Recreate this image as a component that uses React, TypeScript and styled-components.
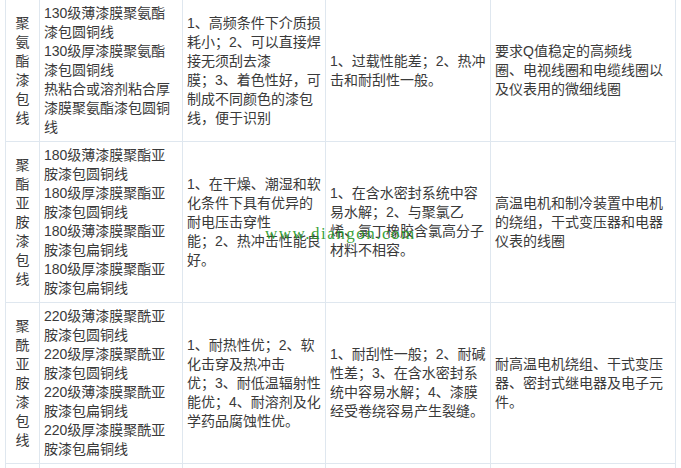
import styled, { createGlobalStyle } from "styled-components";

const GlobalStyle = createGlobalStyle`
  body {
    margin: 0;
    background: #fff;
    font-family: "Liberation Sans", "Noto Sans CJK SC", sans-serif;
  }
`;

const Page = styled.div`
  position: relative;
  padding: 0 5px;
`;

const Table = styled.table`
  margin-top: -1px;
  width: 670px;
  table-layout: fixed;
  border-collapse: collapse;
  color: #3a3a3a;
  font-size: 14px;
  line-height: 19px;
`;

const Cell = styled.td<{ $center?: boolean }>`
  border: 1px solid #dfe7ef;
  padding: 4px;
  vertical-align: middle;
  text-align: ${(p) => (p.$center ? "center" : "left")};
`;

const Line = styled.div`
  white-space: nowrap;
`;

const Watermark = styled.div`
  position: absolute;
  left: 265px;
  top: 225px;
  font-family: "Liberation Serif", serif;
  font-size: 17px;
  letter-spacing: 1.5px;
  line-height: 20px;
  color: rgba(34, 150, 34, 0.9);
  pointer-events: none;
`;

interface IRow {
  name: string;
  types: string[];
  pros: string[];
  cons: string[];
  uses: string[];
}

const rows: IRow[] = [
  {
    name: "聚氨酯漆包线",
    types: [
      "130级薄漆膜聚氨酯",
      "漆包圆铜线",
      "130级厚漆膜聚氨酯",
      "漆包圆铜线",
      "热粘合或溶剂粘合厚",
      "漆膜聚氨酯漆包圆铜",
      "线",
    ],
    pros: [
      "1、高频条件下介质损",
      "耗小；2、可以直接焊",
      "接无须刮去漆",
      "膜；3、着色性好，可",
      "制成不同颜色的漆包",
      "线，便于识别",
    ],
    cons: ["1、过载性能差；2、热冲", "击和耐刮性一般。"],
    uses: ["要求Q值稳定的高频线", "圈、电视线圈和电缆线圈以", "及仪表用的微细线圈"],
  },
  {
    name: "聚酯亚胺漆包线",
    types: [
      "180级薄漆膜聚酯亚",
      "胺漆包圆铜线",
      "180级厚漆膜聚酯亚",
      "胺漆包圆铜线",
      "180级薄漆膜聚酯亚",
      "胺漆包扁铜线",
      "180级厚漆膜聚酯亚",
      "胺漆包扁铜线",
    ],
    pros: [
      "1、在干燥、潮湿和软",
      "化条件下具有优异的",
      "耐电压击穿性",
      "能；2、热冲击性能良",
      "好。",
    ],
    cons: [
      "1、在含水密封系统中容",
      "易水解；2、与聚氯乙",
      "烯、氯丁橡胶含氯高分子",
      "材料不相容。",
    ],
    uses: ["高温电机和制冷装置中电机", "的绕组，干式变压器和电器", "仪表的线圈"],
  },
  {
    name: "聚酰亚胺漆包线",
    types: [
      "220级薄漆膜聚酰亚",
      "胺漆包圆铜线",
      "220级厚漆膜聚酰亚",
      "胺漆包圆铜线",
      "220级薄漆膜聚酰亚",
      "胺漆包扁铜线",
      "220级厚漆膜聚酰亚",
      "胺漆包扁铜线",
    ],
    pros: [
      "1、耐热性优；2、软",
      "化击穿及热冲击",
      "优；3、耐低温辐射性",
      "能优；4、耐溶剂及化",
      "学药品腐蚀性优。",
    ],
    cons: [
      "1、耐刮性一般；2、耐碱",
      "性差；3、在含水密封系",
      "统中容易水解；4、漆膜",
      "经受卷绕容易产生裂缝。",
    ],
    uses: ["耐高温电机绕组、干式变压", "器、密封式继电器及电子元", "件。"],
  },
];

function Lines({ items }: { items: string[] }) {
  return (
    <>
      {items.map((t, i) => (
        <Line key={i}>{t}</Line>
      ))}
    </>
  );
}

export default function App() {
  return (
    <Page>
      <GlobalStyle />
      <Table>
        <colgroup>
          <col style={{ width: 34 }} />
          <col style={{ width: 143 }} />
          <col style={{ width: 143 }} />
          <col style={{ width: 165 }} />
          <col style={{ width: 185 }} />
        </colgroup>
        <tbody>
          {rows.map((r) => (
            <tr key={r.name}>
              <Cell $center>
                <Lines items={r.name.split("")} />
              </Cell>
              <Cell>
                <Lines items={r.types} />
              </Cell>
              <Cell>
                <Lines items={r.pros} />
              </Cell>
              <Cell>
                <Lines items={r.cons} />
              </Cell>
              <Cell>
                <Lines items={r.uses} />
              </Cell>
            </tr>
          ))}
          <tr>
            <Cell style={{ height: 40 }} />
            <Cell />
            <Cell />
            <Cell />
            <Cell />
          </tr>
        </tbody>
      </Table>
      <Watermark>www.diangon.com</Watermark>
    </Page>
  );
}
